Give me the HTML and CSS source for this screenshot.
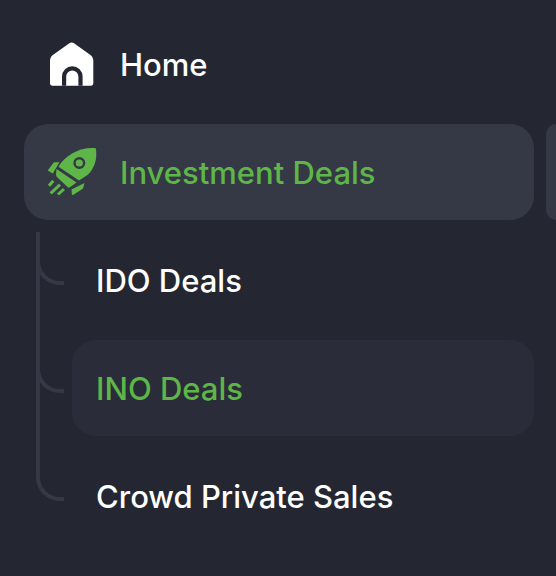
FILE: index.html
```html
<!DOCTYPE html>
<html lang="en">
<head>
<meta charset="utf-8">
<title>Menu</title>
<link rel="stylesheet" href="styles.css">
</head>
<body>
<nav class="menu">
  <a class="item">
    <svg class="icon" viewBox="0 0 48 48" aria-hidden="true">
      <path class="home-shape" d="M21 3.600a4.500 4.500 0 0 1 5.400 0L42.800 15.200Q45.300 17 45.300 20V43.600Q45.300 45.700 43.200 45.700H4.100Q2 45.700 2 43.600V20Q2 17 4.500 15.200Z"/>
      <path class="home-door" d="M14 45.700V36.500a10.300 10.300 0 0 1 20.600 0V45.700H30.400V36.500a6.100 6.100 0 0 0-12.200 0V45.700Z"/>
    </svg>
    <span>Home</span>
  </a>
  <div class="row">
    <a class="item item-active">
      <svg class="icon" viewBox="0 0 48 48" aria-hidden="true">
        <path class="rocket" d="M47.800 .2C49.500 10 47 20 39.500 27L31 32.500 10.500 18.800C17 6.500 34 -1.500 47.800 .2Z"/>
        <circle class="rocket-window" cx="31.300" cy="15" r="4.800"/>
        <path class="rocket" d="M8.500 21 28.500 34.500 21.500 39.500Q20.500 39.800 19.500 39L9.500 29.500Q8 28 8 26.500Z"/>
        <path class="rocket" d="M-.3 22.500 5.500 14.800Q5.900 14.300 6.500 14.300H11.500L4.800 25.500Z"/>
        <path class="rocket" d="M23.500 41.500 36.500 35 35.300 39.500Q35 40.500 34.300 41L25.500 46.800Q24 47.300 23.800 46Z"/>
        <path class="rocket-flame" d="M1 37.700 5.300 32.700M2.700 45.300 12 36.700M10 46.500 16 41"/>
      </svg>
      <span>Investment Deals</span>
    </a>
    <div class="peek"></div>
  </div>
  <div class="sub">
    <a class="sub-item"><span>IDO Deals</span></a>
    <a class="sub-item sub-active"><span>INO Deals</span></a>
    <a class="sub-item"><span>Crowd Private Sales</span></a>
  </div>
</nav>
</body>
</html>
```
FILE: styles.css
```css
html, body {
  margin: 0;
  height: 100%;
  background: #242731;
  overflow: hidden;
}
.menu {
  display: flex;
  flex-direction: column;
  gap: 12px;
  padding: 16px 0 0 24px;
  font-family: Inter, "Liberation Sans", sans-serif;
  font-size: 31px;
  font-weight: 500;
  color: #fff;
}
.item {
  display: flex;
  flex: none;
  align-items: center;
  gap: 24px;
  width: 510px;
  height: 96px;
  padding: 0 24px;
  box-sizing: border-box;
  border-radius: 24px;
}
.item-active {
  background: #353945;
  color: #5eb648;
}
.row {
  display: flex;
  gap: 12px;
}
.peek {
  flex: none;
  width: 10px;
  height: 96px;
  border-radius: 16px 0 0 16px;
  background: #353945;
}
.icon {
  flex: none;
  width: 48px;
  height: 48px;
  overflow: visible;
}
.home-shape { fill: #fff; }
.home-door { fill: #242731; }
.rocket { fill: #5eb648; }
.rocket-window { fill: #5eb648; stroke: #353945; stroke-width: 2.400; }
.rocket-flame { fill: none; stroke: #5eb648; stroke-width: 3; }
.sub {
  position: relative;
  display: flex;
  flex-direction: column;
  gap: 12px;
  margin-left: 48px;
  width: 462px;
}
.sub::before {
  content: "";
  position: absolute;
  left: -36px;
  top: 0;
  width: 4px;
  height: 245px;
  background: #353945;
}
.sub-item {
  position: relative;
  display: flex;
  align-items: center;
  height: 96px;
  padding: 0 24px;
  box-sizing: border-box;
  border-radius: 24px;
}
.sub-item::before {
  content: "";
  position: absolute;
  left: -36px;
  top: 21px;
  width: 28px;
  height: 32px;
  box-sizing: border-box;
  border-left: 4px solid #353945;
  border-bottom: 4px solid #353945;
  border-bottom-left-radius: 24px;
}
.sub-active {
  background: #2a2d39;
  color: #5eb648;
}
```
